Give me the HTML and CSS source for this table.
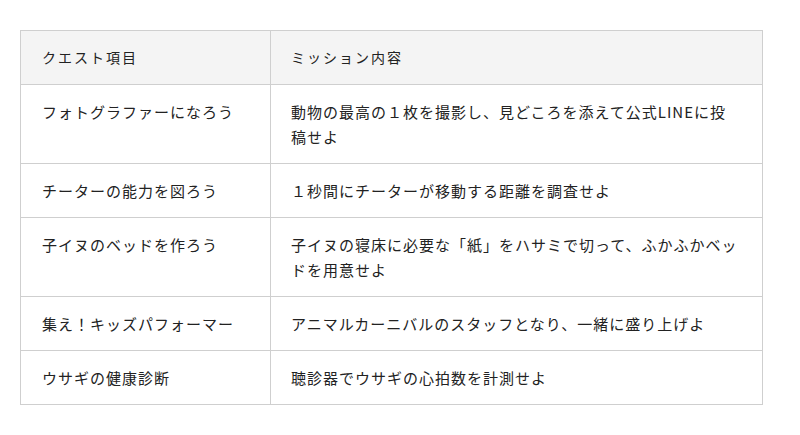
FILE: index.html
```html
<!DOCTYPE html>
<html lang="ja">
<head>
<meta charset="utf-8">
<title>クエスト</title>
<link rel="stylesheet" href="styles.css">
</head>
<body>
<table class="quest">
  <colgroup><col class="c1"><col class="c2"></colgroup>
  <thead>
    <tr><th>クエスト項目</th><th>ミッション内容</th></tr>
  </thead>
  <tbody>
    <tr><td>フォトグラファーになろう</td><td>動物の最高の１枚を撮影し、見どころを添えて公式LINEに投稿せよ</td></tr>
    <tr><td>チーターの能力を図ろう</td><td>１秒間にチーターが移動する距離を調査せよ</td></tr>
    <tr><td>子イヌのベッドを作ろう</td><td>子イヌの寝床に必要な「紙」をハサミで切って、ふかふかベッドを用意せよ</td></tr>
    <tr><td>集え！キッズパフォーマー</td><td>アニマルカーニバルのスタッフとなり、一緒に盛り上げよ</td></tr>
    <tr><td>ウサギの健康診断</td><td>聴診器でウサギの心拍数を計測せよ</td></tr>
  </tbody>
</table>
</body>
</html>
```
FILE: styles.css
```css
html, body { margin: 0; padding: 0; background: #fff; }
body {
  font-family: "Noto Sans CJK JP", "Noto Sans", sans-serif;
  color: #222;
  padding: 30px 0 0 20px;
}
.quest {
  border-collapse: collapse;
  table-layout: fixed;
  width: 742px;
}
.c1 { width: 250px; }
.c2 { width: 492px; }
.quest th, .quest td {
  border: 1px solid #cfcfcf;
  text-align: left;
  vertical-align: top;
  padding: 14px 20px 14px 21px;
  line-height: 25px;
  font-size: 15px;
  letter-spacing: 1px;
  font-weight: 400;
}
.quest td + td, .quest th + th { padding-left: 20px; }
.quest th {
  background: #f4f4f4;
  font-size: 14px;
  letter-spacing: 2px;
}
```
